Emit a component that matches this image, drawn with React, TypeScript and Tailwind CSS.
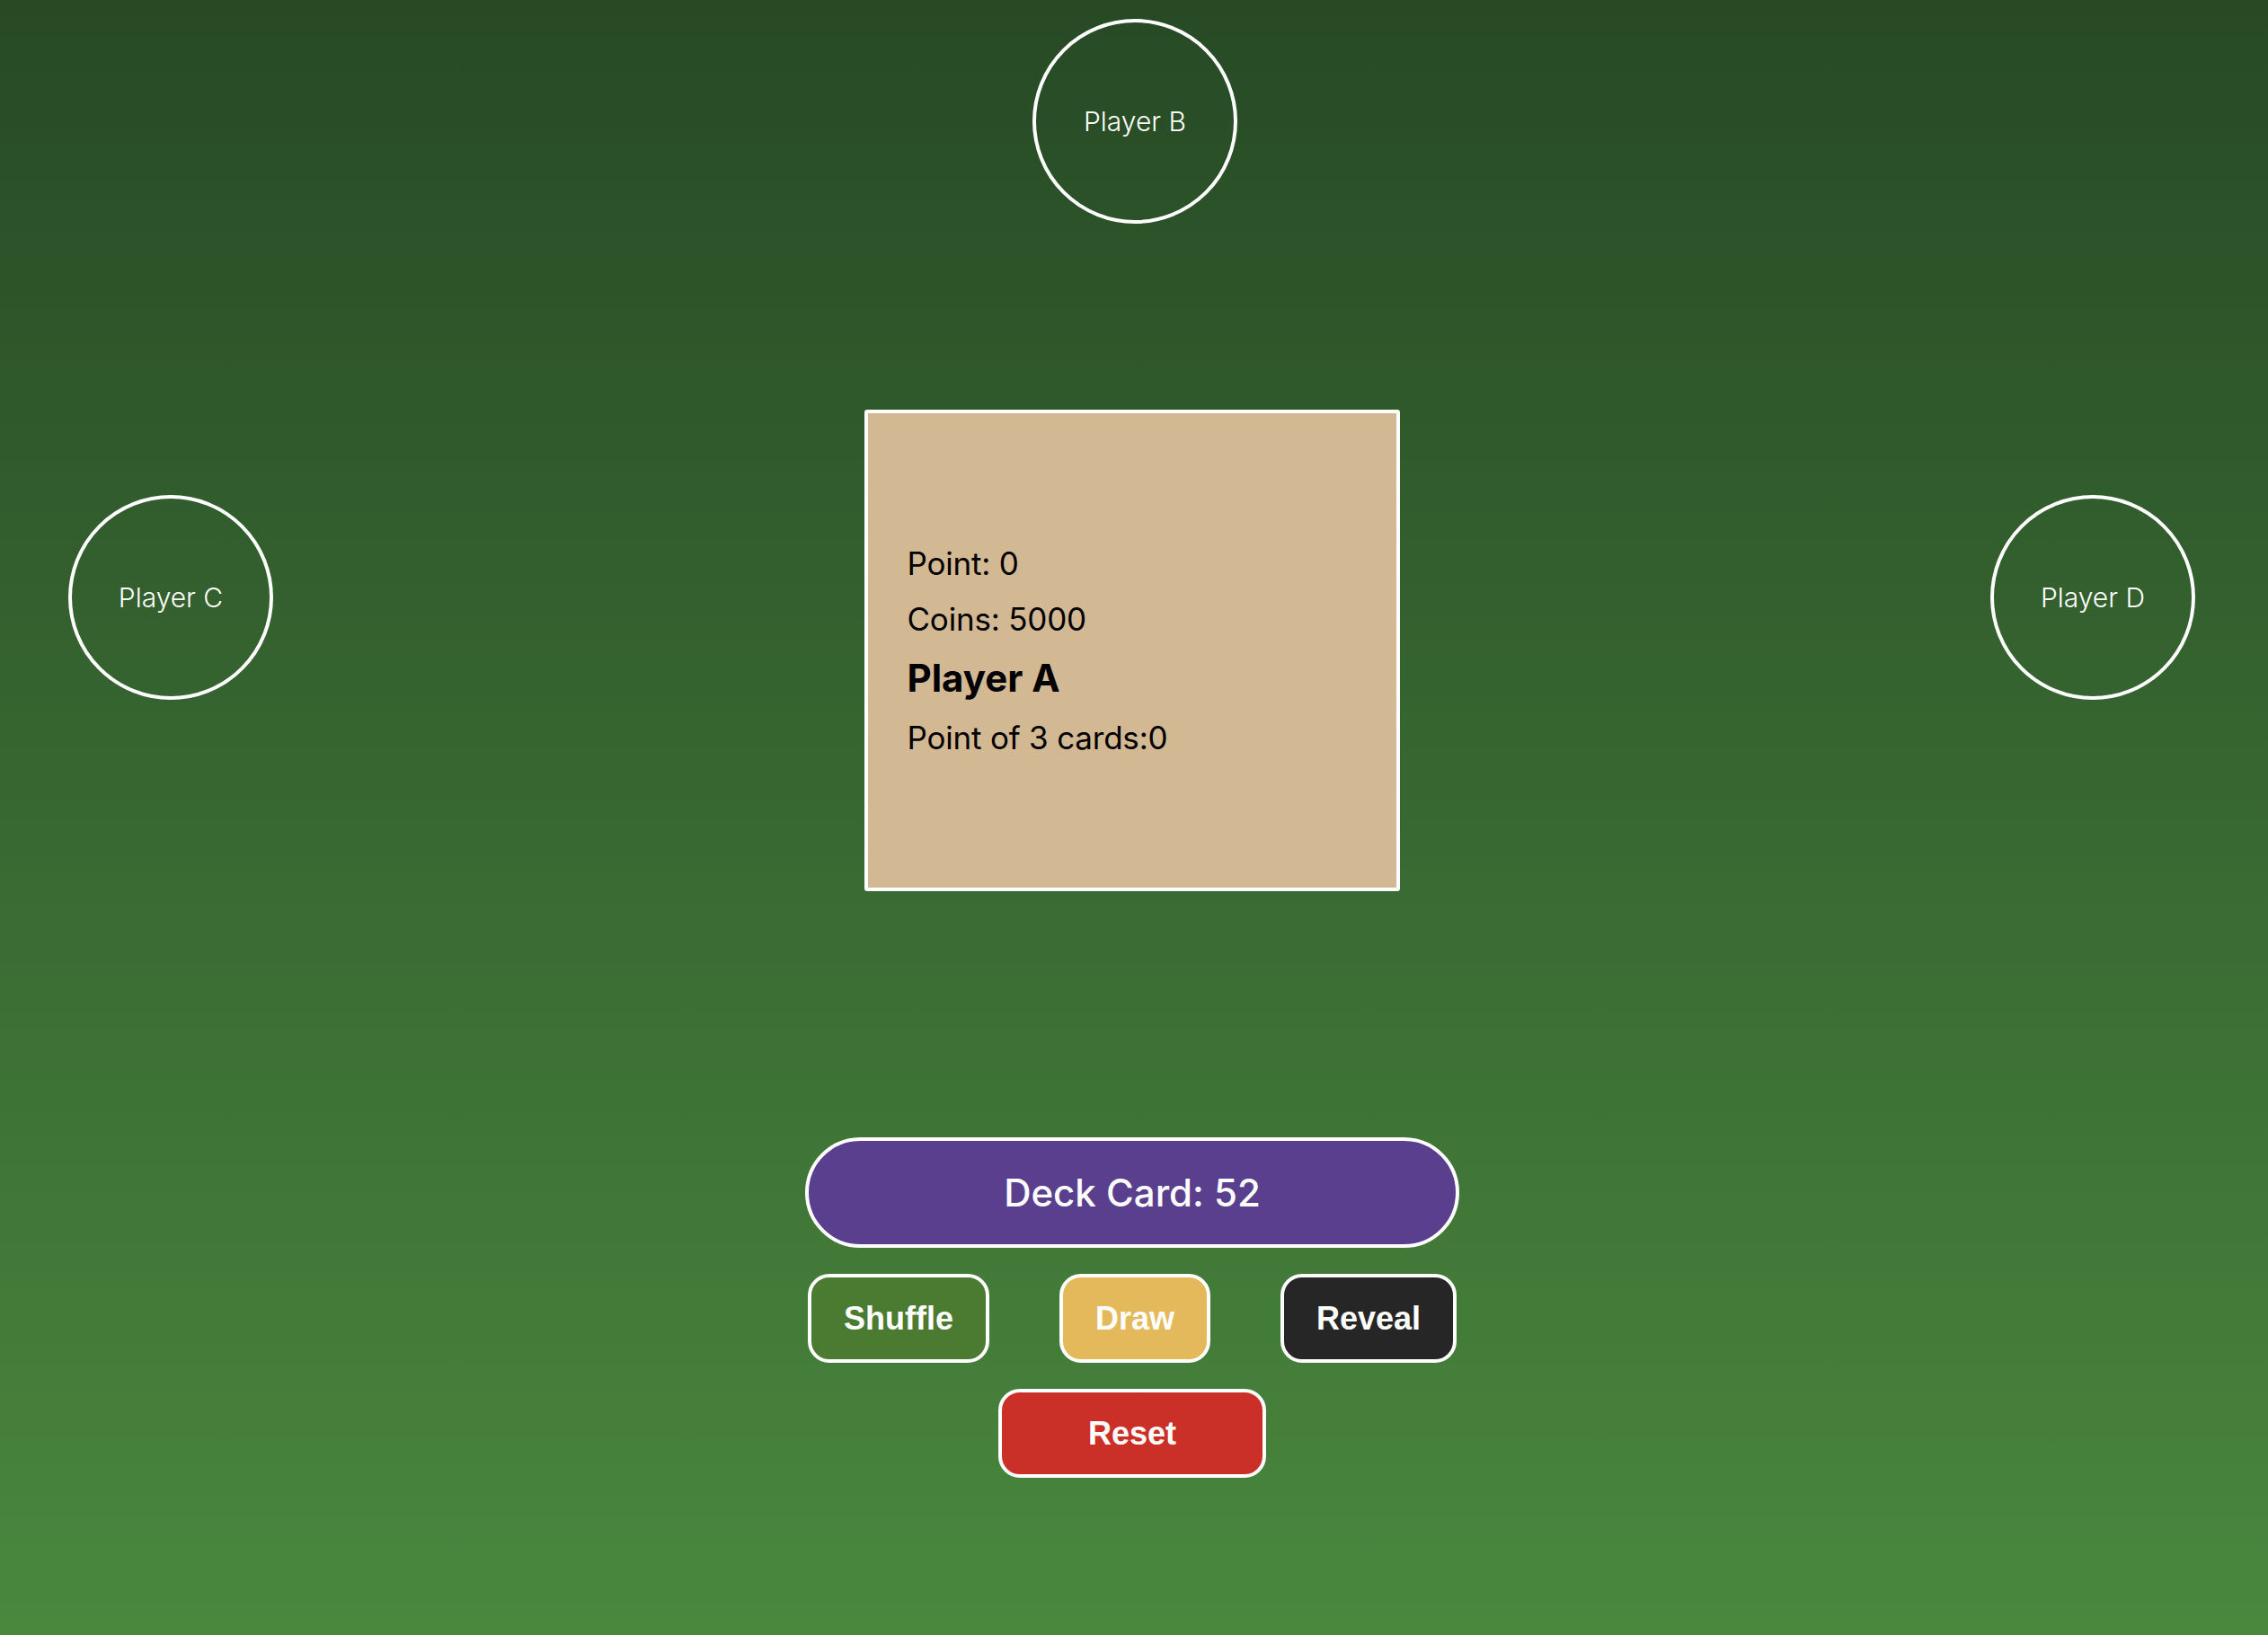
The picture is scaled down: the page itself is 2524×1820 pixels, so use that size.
const PlayerSeat = ({ name, className = "" }: { name: string; className?: string }) => (
  <div
    className={`w-[228px] h-[228px] rounded-full border-4 border-white flex items-center justify-center text-white text-[30px] font-light ${className}`}
  >
    {name}
  </div>
);

const ActionButton = ({ label, className }: { label: string; className: string }) => (
  <button
    className={`border-4 border-white rounded-[24px] py-[25px] leading-[41px] text-[36px] font-bold text-white font-['Liberation_Sans',Arial,sans-serif] ${className}`}
  >
    {label}
  </button>
);

export default function App() {
  return (
    <div className="min-h-[1820px] w-full bg-gradient-to-b from-[#274a25] to-[#4a883e] font-['Inter','Noto_Sans',sans-serif] flex flex-col items-center">
      {/* top seat */}
      <PlayerSeat name="Player B" className="mt-[21px] ml-[2px]" />

      {/* middle row: side seats + current player card */}
      <div className="w-full flex justify-between items-start pl-[76px] pr-[81px] mt-[207px]">
        <PlayerSeat name="Player C" className="mt-[95px]" />

        <div className="w-[596px] h-[536px] bg-[#d2b893] border-4 border-white rounded-[3px] flex flex-col justify-center pl-[44px] text-black">
          <div className="text-[35px] leading-[62px] tracking-[-0.2px]">Point: 0</div>
          <div className="text-[35px] leading-[62px] tracking-[-0.2px]">Coins: 5000</div>
          <div className="text-[42px] leading-[70px] font-bold">Player A</div>
          <div className="text-[35px] leading-[62px] tracking-[-0.2px]">Point of 3 cards:0</div>
        </div>

        <PlayerSeat name="Player D" className="mt-[95px]" />
      </div>

      {/* deck + controls */}
      <div className="flex flex-col items-center mr-[4px]">
        <div className="mt-[274px] w-[728px] h-[123px] rounded-full border-4 border-white bg-[#5a3f8f] flex items-center justify-center text-white text-[42px] font-medium">
          Deck Card: 52
        </div>

        <div className="mt-[29px] flex gap-[78px]">
          <ActionButton label="Shuffle" className="bg-[#4b7a31] px-[36px]" />
          <ActionButton label="Draw" className="bg-[#e4b95b] px-[36px]" />
          <ActionButton label="Reveal" className="bg-[#262626] px-[36px]" />
        </div>

        <div className="mt-[29px]">
          <ActionButton label="Reset" className="bg-[#cb3028] px-[96px]" />
        </div>
      </div>
    </div>
  );
}
